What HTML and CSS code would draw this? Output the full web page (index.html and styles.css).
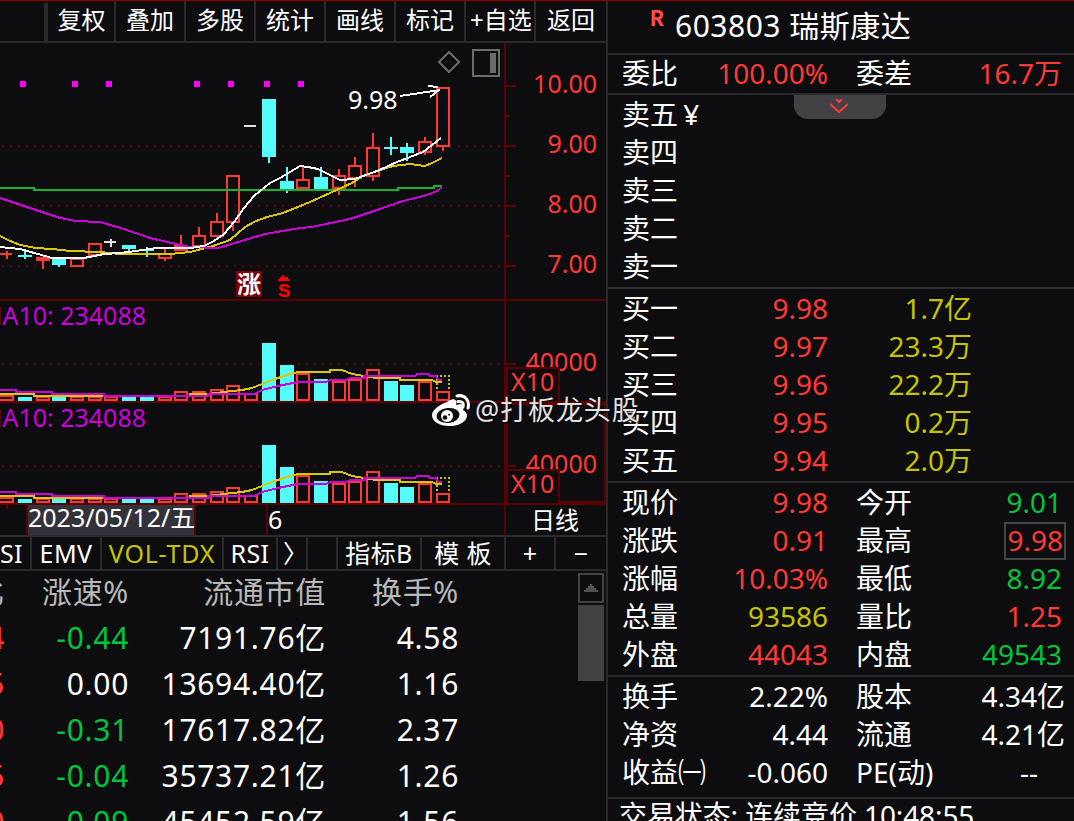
FILE: index.html
```html
<!DOCTYPE html>
<html lang="zh-CN">

<head>
    <meta charset="utf-8">
    <title>603803 瑞斯康达</title>
    <link rel="stylesheet" href="styles.css">
</head>
<body>
    <div class="app">
        <div class="left">
            <div class="toolbar">
                <span class="tool-first"></span>
                <span>复权</span>
                <span>叠加</span>
                <span>多股</span>
                <span>统计</span>
                <span>画线</span>
                <span>标记</span>
                <span class="tool-add">+自选</span>
                <span>返回</span>
            </div>

            <svg class="chart" width="606" height="492" viewBox="0 43 606 492">
                <!-- grid -->
                <path class="dots" d="M2 146H504M2 206H504M2 266H504M2 364H504M2 466H504"/>
                <path class="frame" d="M505 43V535M0 300H606M0 402H606M0 504H606M505 86H516M505 116H510M505 146H516M505 176H510M505 206H516M505 236H510M505 266H516M505 364H516M505 466H516"/>
                <path class="frame" d="M507 403V503M605 402V504M506 404H606M506 502H606"/>

                <!-- event marks -->
                <path class="mark" d="M20 81h6v6h-6zM72 81h6v6h-6zM106 81h6v6h-6zM194 81h6v6h-6zM228 81h6v6h-6zM264 81h6v6h-6zM298 81h6v6h-6z"/>

                <!-- candles -->
                <path class="up" d="M0 254H12M7 251V259M36 258H50M36 260H50M43 261V269M71 259H83V266H71zM89 244H101V255H89zM159 254H171V258H159zM165 249V253M165 259V261M175 246H187V250H175zM181 235V245M193 236H205V246H193zM199 227V235M211 222H223V236H211zM217 213V221M227 176H239V222H227zM233 223V231M297 180H309V188H297zM303 167V179M333 176H345V188H333zM339 169V175M339 189V195M349 166H361V178H349zM355 157V165M355 179V187M367 148H379V176H367zM373 133V147M373 177V181M419 142H431V152H419zM425 137V141M425 153V155M437 88H449V146H437zM443 147V151"/>
                <path class="down" d="M18 256H32M25 249V259M59 265V267M129 249V251M140 250H154M147 247V257M269 157V163M287 167V193M321 167V190M384 148H398M391 137V155M407 143V161"/>
                <path class="down-fill" d="M52 259h14v6h-14zM122 245h14v4h-14zM262 99h14v58h-14zM280 181h14v8h-14zM314 177h14v12h-14zM400 147h14v6h-14z"/>
                <path class="flat" d="M104 242H116M111 239V247M244 126H256"/>

                <!-- moving averages -->
                <path class="ma-green" d="M0 188H34V190H398V188H434V186H442"/>
                <polyline class="ma-yellow" points="0,236 8,240 20,245 36,248 52,249 70,251 100,252 120,254 170,254 190,252 213,246 230,240 245,227 256,221 267,217 283,213 310,202 330,193 352,183 363,176 377,171 393,166 410,164 425,166 432,163 442,158"/>
                <polyline class="ma-magenta" points="0,198 30,208 60,218 76,221 100,222 124,229 150,238 176,244 190,247 218,248 235,243 265,234 300,228 312,227 350,219 377,210 403,201 427,195 437,191 442,187"/>
                <polyline class="ma-white" points="0,247 20,249 38,254 52,258 84,258 104,254 120,253 136,251 156,248 190,248 204,246 214,241 224,234 234,222 244,208 254,196 265,187 270,183 280,178 290,172 300,166 308,167 318,169 330,175 340,180 355,179 363,176 377,171 397,162 410,157 423,152 432,145 441,138"/>

                <!-- high price label -->
                <text class="label-white" x="348" y="109">9.98</text>
                <path class="ma-white" d="M400 96L440 90M428 86L438 87M439 90L430 97"/>
                <path class="tool-line" d="M449 52L459 62L449 72L439 62z"/>
                <path class="tool-box" d="M473 50H499V76H473z"/>
                <path class="tool-fill" d="M490 53h6v20h-6z"/>

                <!-- badges under the candles -->
                <rect class="badge-bg" x="236" y="271" width="26" height="26"/>
                <text class="badge-text" x="237" y="293">涨</text>
                <path class="dollar-top" d="M278 281h12v-2h-2v-2h-4v-2h-2v2h-2v2h-2z"/>
                <text class="dollar" x="277" y="297">s</text>

                <!-- volume pane, drawn twice -->
                <g id="volume">
                    <text class="label-ma" x="146" y="325">MA10: 234088</text>
                    <path class="up" d="M-1 396H13V400H-1zM37 397H49V400H37zM71 397H83V400H71zM89 397H101V400H89zM105 397H117V400H105zM159 397H171V400H159zM175 392H187V400H175zM193 392H205V400H193zM211 390H223V400H211zM227 386H239V400H227zM245 394H257V400H245zM297 374H309V400H297zM333 382H345V400H333zM349 380H361V400H349zM367 370H379V400H367zM419 382H431V400H419zM437 392H449V400H437z"/>
                    <path class="down-fill" d="M18 397h14v4h-14zM52 396h14v5h-14zM122 397h14v4h-14zM140 397h14v4h-14zM262 343h14v58h-14zM280 365h14v36h-14zM314 379h14v22h-14zM384 381h14v20h-14zM400 385h14v16h-14z"/>
                    <path class="forecast" d="M436 376H450M437 379V391M449 379V391"/>
                    <polyline class="ma-yellow" points="0,394 34,394 34,396 190,396 190,394 208,394 224,392 242,390 252,388 262,384 272,380 290,374 298,372 330,372 330,370 342,370 352,374 364,376 376,378 400,378 400,380 432,380 436,382 442,382"/>
                    <polyline class="ma-magenta" points="0,390 16,390 16,392 52,392 52,394 104,394 104,396 208,396 208,394 254,394 262,390 278,386 288,384 298,382 326,382 330,380 346,380 350,378 364,378 364,376 415,376 417,374 428,374 430,376 436,376 438,380 442,380"/>
                    <text class="label-red" x="597" y="371">40000</text>
                    <rect class="unit-box" x="507" y="368" width="52" height="34"/>
                    <text class="label-unit" x="511" y="391">X10</text>
                </g>
                <use href="#volume" y="102"/>

                <!-- price axis -->
                <text class="label-red" x="597" y="93">10.00</text>
                <text class="label-red" x="597" y="153">9.00</text>
                <text class="label-red" x="597" y="213">8.00</text>
                <text class="label-red" x="597" y="273">7.00</text>

                <!-- date axis -->
                <path class="frame" d="M7 505V509M27 505V535M195 505V535M267 505V535"/>
                <rect class="date-bg" x="28" y="505" width="166" height="30"/>
                <text class="label-date" x="28" y="527">2023/05/12/五</text>
                <text class="label-date" x="268" y="529">6</text>
                <text class="label-period" x="531" y="529">日线</text>
            </svg>

            <div class="tabs">
                <span class="tab-cut">ASI</span>
                <span>EMV</span>
                <span class="tab-on">VOL-TDX</span>
                <span>RSI</span>
                <span class="tab-more">〉</span>
                <span></span>
                <span>指标B</span>
                <span>模 板</span>
                <span>+</span>
                <span>−</span>
            </div>

            <div class="list">
                <div class="rows">
                    <div class="row row-head"><span>比</span><span>涨速%</span><span>流通市值</span><span>换手%</span></div>
                    <div class="row"><span class="red">4</span><span class="green">-0.44</span><span>7191.76亿</span><span>4.58</span></div>
                    <div class="row"><span class="red">5</span><span>0.00</span><span>13694.40亿</span><span>1.16</span></div>
                    <div class="row"><span class="red">0</span><span class="green">-0.31</span><span>17617.82亿</span><span>2.37</span></div>
                    <div class="row"><span class="red">5</span><span class="green">-0.04</span><span>35737.21亿</span><span>1.26</span></div>
                    <div class="row"><span class="red">0</span><span class="green">-0.09</span><span>45452.59亿</span><span>1.56</span></div>
                </div>
                <div class="scroll">
                    <div class="scroll-up">
                        <svg width="14" height="8" viewBox="0 0 14 8"><path d="M0 8V6H2V4H4V2H6V0H8V2H10V4H12V6H14V8z"/></svg>
                    </div>
                    <div class="scroll-thumb"></div>
                </div>
            </div>
        </div>

        <div class="right">
            <div class="title"><sup>R</sup><span>603803 瑞斯康达</span></div>

            <div class="block block-ratio">
                <div class="quote"><span>委比</span><span class="red">100.00%</span><span>委差</span><span class="red">16.7万</span></div>
            </div>

            <div class="block block-sell">
                <div class="pull">
                    <svg width="18" height="14" viewBox="0 0 18 14"><path d="M6 0L9 3L12 0M0 5L9 13L18 5"/></svg>
                </div>
                <div class="quote"><span>卖五 <b class="yuan">¥</b></span></div>
                <div class="quote"><span>卖四</span></div>
                <div class="quote"><span>卖三</span></div>
                <div class="quote"><span>卖二</span></div>
                <div class="quote"><span>卖一</span></div>
            </div>

            <div class="block block-buy">
                <div class="quote"><span>买一</span><span class="red">9.98</span><span class="yellow">1.7亿</span></div>
                <div class="quote"><span>买二</span><span class="red">9.97</span><span class="yellow">23.3万</span></div>
                <div class="quote"><span>买三</span><span class="red">9.96</span><span class="yellow">22.2万</span></div>
                <div class="quote"><span>买四</span><span class="red">9.95</span><span class="yellow">0.2万</span></div>
                <div class="quote"><span>买五</span><span class="red">9.94</span><span class="yellow">2.0万</span></div>
            </div>

            <div class="block">
                <div class="quote"><span>现价</span><span class="red">9.98</span><span>今开</span><span class="green">9.01</span></div>
                <div class="quote"><span>涨跌</span><span class="red">0.91</span><span>最高</span><span class="red"><b class="boxed">9.98</b></span></div>
                <div class="quote"><span>涨幅</span><span class="red">10.03%</span><span>最低</span><span class="green">8.92</span></div>
                <div class="quote"><span>总量</span><span class="yellow">93586</span><span>量比</span><span class="red">1.25</span></div>
                <div class="quote"><span>外盘</span><span class="red">44043</span><span>内盘</span><span class="green">49543</span></div>
            </div>

            <div class="block block-base">
                <div class="quote"><span>换手</span><span>2.22%</span><span>股本</span><span class="wide">4.34亿</span></div>
                <div class="quote"><span>净资</span><span>4.44</span><span>流通</span><span class="wide">4.21亿</span></div>
                <div class="quote"><span>收益㈠</span><span>-0.060</span><span>PE(动)</span><span class="none">--</span></div>
            </div>

            <div class="status">交易状态: 连续竞价 10:48:55</div>
        </div>

        <div class="watermark">
            <svg width="40" height="34" viewBox="0 0 40 34">
                <path class="wb-body" d="M15 9C21 4 26 6 24 12C31 10 33 13 31 17C40 22 33 33 18 33C6 33 0 28 0 22C0 17 8 11 15 9z"/>
                <ellipse class="wb-eye" cx="16" cy="22.500" rx="11.500" ry="7.500" transform="rotate(-6 16 22)"/>
                <circle class="wb-body" cx="15" cy="23" r="6"/>
                <circle class="wb-eye" cx="13" cy="24.500" r="2.300"/>
                <circle class="wb-eye" cx="17.200" cy="21.800" r="1"/>
                <path class="wb-wave" d="M25 3C33 1 38 8 36 15M26 8.500C30 8 32 10 31 14"/>
            </svg>
            <span>@打板龙头股</span>
        </div>
    </div>
</body>

</html>
```
FILE: styles.css
```css
* {
    box-sizing: border-box;
}

body {
    margin: 0;
    background: #0d0d0f;
    color: #fff;
    font-family: "Noto Sans", "Noto Sans CJK SC", sans-serif;
    overflow: hidden;
}

.app {
    position: relative;
    display: flex;
    width: 1074px;
    height: 821px;
    overflow: hidden;
    border-top: 1px solid #980000;
}

.red { color: #ff3936; }
.green { color: #00c43c; }
.yellow { color: #c4c400; }

/* left side */
.left {
    width: 606px;
    overflow: hidden;
}

.toolbar {
    display: grid;
    grid-template-columns: 48px repeat(7, 70px) 68px;
    height: 42px;
    border-bottom: 2px solid #2a2a2c;
    font-size: 24px;
    line-height: 38px;
    text-align: center;
}
.toolbar span {
    border-right: 2px solid #2a2a2c;
    white-space: nowrap;
    overflow: hidden;
}
.toolbar .tool-first {
    border-right-width: 4px;
    margin-top: 2px;
}
.toolbar span:nth-child(n+2) {
    position: relative;
    left: -2px;
}
.toolbar span:nth-child(2) {
    padding-left: 3px;
}
.toolbar span:last-child {
    border-right: none;
    width: 70px;
}
.toolbar .tool-add {
    text-align: left;
    padding-left: 4px;
}

/* chart */
.chart {
    display: block;
    font-size: 25px;
    shape-rendering: crispEdges;
}
.chart path,
.chart polyline {
    fill: none;
    stroke-width: 2;
}
.chart .dots { stroke: #5c0000; stroke-dasharray: 2 6; }
.chart .frame { stroke: #5c0000; }
.chart .mark { fill: #ff00ff; }
.chart .up { stroke: #ff3936; }
.chart .down { stroke: #54fcfc; }
.chart .down-fill { fill: #54fcfc; }
.chart .flat { stroke: #e0e0e0; }
.chart .ma-green { stroke: #16b42c; }
.chart .ma-yellow { stroke: #dcc800; }
.chart .ma-magenta { stroke: #cc00dc; }
.chart .ma-white { stroke: #fff; }
.chart .forecast { stroke: #c4c400; stroke-dasharray: 2 2; }
.chart .tool-line { stroke: #666; }
.chart .tool-box { stroke: #6c6c6c; }
.chart .tool-fill { fill: #6c6c6c; }
.chart .dollar-top { fill: #f00; }
.badge-bg { fill: #800000; }
.badge-text { fill: #fff; font-size: 24px; font-weight: bold; }
.dollar { fill: #f00; font: bold 24px "Liberation Mono", monospace; }
.label-white { fill: #fff; }
.label-red { fill: #ff3936; text-anchor: end; }
.label-ma { fill: #cc00dc; text-anchor: end; }
.label-unit { fill: #ff3936; }
.unit-box { fill: #0d0d0f; stroke: #5c0000; stroke-width: 2; }
.date-bg { fill: #32323a; }
.label-date { fill: #fff; }
.label-period { fill: #fff; font-size: 24px; }

/* indicator tabs */
.tabs {
    display: grid;
    grid-template-columns: 32px 70px 122px 54px 30px 30px 84px 84px 50px 50px;
    height: 36px;
    border-top: 2px solid #2a2a2c;
    border-bottom: 2px solid #2a2a2c;
    font-size: 25px;
    line-height: 32px;
    letter-spacing: 0.4px;
    text-align: center;
}
.tabs span {
    border-right: 2px solid #2a2a2c;
    white-space: nowrap;
    overflow: hidden;
}
.tabs span:last-child {
    border-right: none;
}
.tabs .tab-cut {
    display: flex;
    justify-content: flex-end;
    padding-right: 7px;
}
.tabs .tab-on {
    color: #c4c400;
    letter-spacing: 0.8px;
}
.tabs .tab-more {
    padding-left: 5px;
}

/* stock list */
.list {
    display: flex;
    justify-content: space-between;
    height: 250px;
    padding: 2px 2px 0 0;
}
.row {
    display: grid;
    grid-template-columns: 5px 124px 197px 133px;
    height: 46px;
    font-size: 30px;
    line-height: 38px;
}
.row span {
    display: flex;
    justify-content: flex-end;
    letter-spacing: 0.7px;
    white-space: nowrap;
    overflow: hidden;
}
.row-head {
    color: #b8b8b8;
}
.scroll {
    width: 26px;
}
.scroll-up {
    display: flex;
    align-items: center;
    justify-content: center;
    height: 30px;
    margin-bottom: 2px;
    border: 2px solid #424242;
    fill: #525252;
}
.scroll-thumb {
    height: 76px;
    background: #424242;
}

/* right side */
.right {
    width: 468px;
    border-left: 2px solid #2a2a2c;
    font-size: 28px;
}
.title {
    display: flex;
    height: 52px;
    padding-left: 42px;
    font-size: 30px;
    line-height: 50px;
    letter-spacing: 0.5px;
}
.title sup {
    width: 25px;
    color: #ff4a48;
    font: bold 23px/38px "Liberation Mono", monospace;
}
.block {
    height: 194px;
    padding-top: 1px;
    border-top: 2px solid #2a2a2c;
}
.block-ratio {
    height: 40px;
    padding-top: 0;
}
.block-base {
    height: 122px;
}
.quote {
    display: grid;
    grid-template-columns: 90px 116px 103px 131px;
    padding-left: 14px;
    height: 38px;
    line-height: 36px;
    white-space: nowrap;
}
.quote span:nth-child(2),
.quote span:nth-child(4) {
    text-align: right;
}
.quote span:nth-child(3) {
    padding-left: 28px;
}
.block-buy .quote span:nth-child(3) {
    padding: 0;
    width: 144px;
    text-align: right;
}
.quote .wide {
    margin-right: -3px;
}
.quote .none {
    padding-right: 24px;
}
.yuan {
    margin-left: -2px;
    font-weight: normal;
}
.boxed {
    display: inline-block;
    height: 38px;
    margin-right: -4px;
    padding: 0 1px;
    border: 2px solid #454545;
    font-weight: normal;
    line-height: 32px;
    vertical-align: top;
}
.pull {
    position: absolute;
    top: 94px;
    left: 794px;
    display: flex;
    justify-content: center;
    width: 92px;
    height: 24px;
    padding: 4px 2px 0 0;
    border-radius: 0 0 14px 14px;
    background: #424244;
    fill: none;
    stroke: #ff3936;
    stroke-width: 2;
}
.status {
    height: 24px;
    padding-left: 11px;
    border-top: 2px solid #2a2a2c;
    line-height: 32px;
    letter-spacing: -0.1px;
    white-space: nowrap;
    overflow: hidden;
}

/* watermark over both sides */
.watermark {
    position: absolute;
    top: 392px;
    left: 432px;
    display: flex;
    gap: 3px;
    align-items: center;
    color: #e2e2e2;
    font-size: 27px;
    line-height: 34px;
    letter-spacing: 0.9px;
    text-shadow: 1px 1px 2px #000;
}
.wb-body { fill: #fff; }
.wb-eye { fill: #0d0d0f; }
.wb-wave { fill: none; stroke: #fff; stroke-width: 3; stroke-linecap: round; }
```
